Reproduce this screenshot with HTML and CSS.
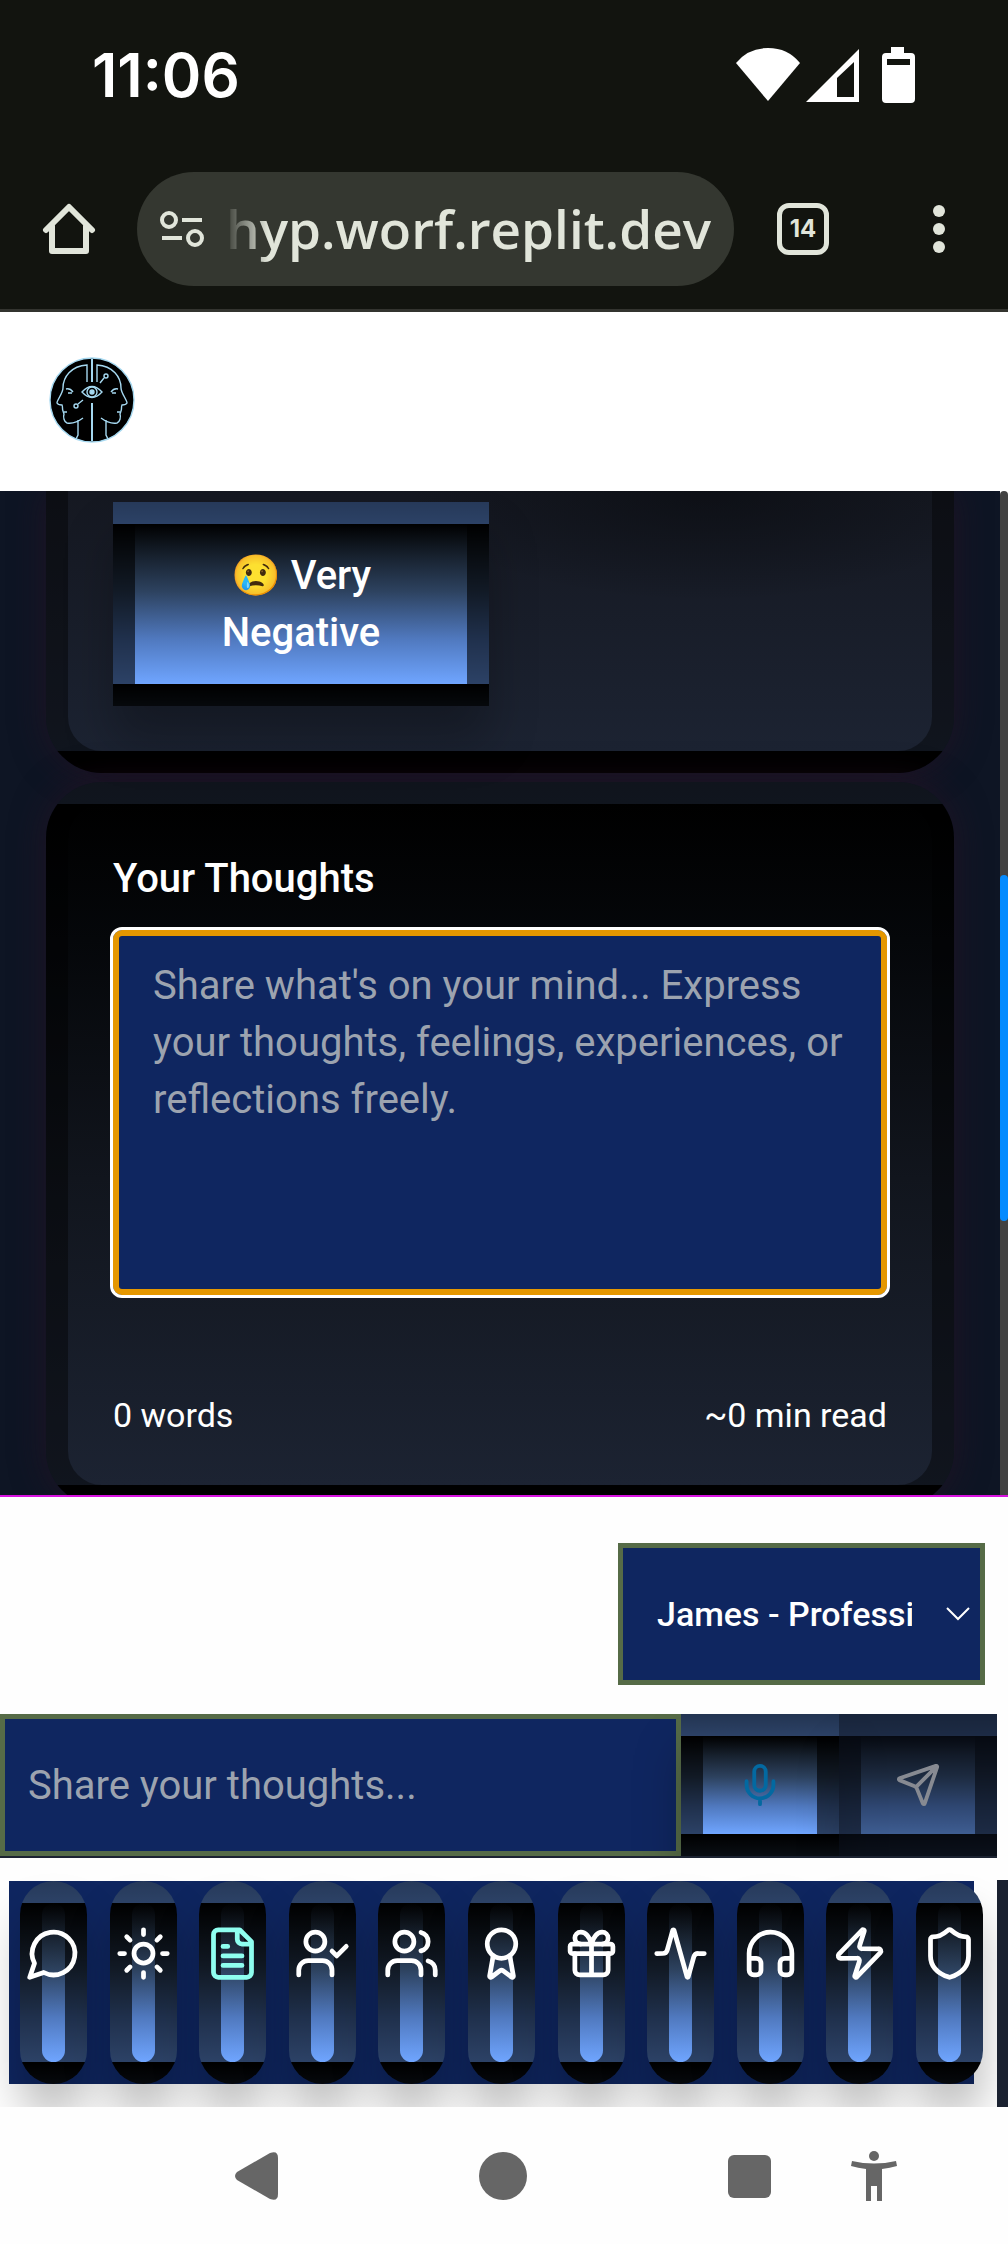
FILE: index.html
```html
<!DOCTYPE html>
<html lang="en">
<head>
<meta charset="utf-8">
<meta name="viewport" content="width=device-width, initial-scale=1">
<title>Journal</title>
<link rel="stylesheet" href="styles.css">
</head>
<body>
<div class="device">
  <div class="status">
    <time class="clock">11:06</time>
    <svg class="status-icons" width="180" height="58" viewBox="0 0 180 58" fill="#fff" aria-hidden="true">
      <path d="M0 17Q12 2 32 2T64 17L32 55Z"/>
      <path fill-rule="evenodd" d="M123 3V56H70ZM118 16L101 32V51H118Z"/>
      <path fill-rule="evenodd" d="M155 1H168V7H175Q179 7 179 11V53Q179 57 175 57H150Q146 57 146 53V11Q146 7 150 7H155ZM151 13V19H174V13Z"/>
    </svg>
  </div>

  <div class="browser-bar">
    <button class="chrome-btn" aria-label="Home">
      <svg width="54" height="54" viewBox="0 0 54 54" fill="none" stroke="#e1e5da" stroke-width="6" stroke-linejoin="round" stroke-linecap="round"><path d="M4 28L27 5L50 28M10 24V49H44V24"/></svg>
    </button>
    <div class="url-pill">
      <svg width="44" height="38" viewBox="0 0 44 38" fill="none" stroke="#e1e5da" stroke-width="4" aria-hidden="true"><circle cx="9" cy="10" r="7"/><path d="M22 10H42M2 28H22"/><circle cx="35" cy="28" r="7"/></svg>
      <span class="url">hyp.worf.replit.dev</span>
    </div>
    <button class="tabs-btn" aria-label="Open tabs">14</button>
    <button class="chrome-btn" aria-label="Menu">
      <svg width="12" height="48" viewBox="0 0 12 48" fill="#e1e5da"><circle cx="6" cy="6" r="6"/><circle cx="6" cy="24" r="6"/><circle cx="6" cy="42" r="6"/></svg>
    </button>
  </div>

  <header class="app-header">
    <svg class="logo" width="86" height="86" viewBox="0 0 86 86" fill="none" stroke="#a5d8f0" stroke-width="1.4" aria-label="Logo" role="img">
      <circle cx="43" cy="43" r="42" fill="#000"/>
      <path stroke-width="2" d="M43 2V25M43 46V84"/>
      <path d="M38 25V8C22 9 14 20 14 31C14 36 8 43 8 46C9 48 12 48 13 48C14 50 13 52 14 54L15 57C14 60 15 65 18 66C24 67 30 64 34 61M29 63V78L27 82"/>
      <path d="M48 25V8C64 9 72 20 72 31C72 36 78 43 78 46C77 48 74 48 73 48C72 50 73 52 72 54L71 57C72 60 71 65 68 66C62 67 56 64 52 61M57 63V78L59 82"/>
      <path d="M33 35Q43 24 53 35Q43 46 33 35Z"/><circle cx="43" cy="35" r="5"/><circle cx="43" cy="35" r="2" fill="#a5d8f0"/>
      <path d="M17 32Q21 31 24 35M19 36H23M69 32Q65 31 62 35M67 36H63M51 26L55 21M34 43L29 47M15 55H18M71 55H68"/>
      <circle cx="57" cy="19" r="2"/><circle cx="27" cy="49" r="2"/>
    </svg>
  </header>

  <div class="scroller">
    <main class="content">
      <section class="card card-mood">
        <button class="glass-btn mood-btn">😢 Very Negative</button>
      </section>
      <section class="card card-thoughts">
        <label class="field-label" for="thoughts">Your Thoughts</label>
        <textarea class="thoughts" id="thoughts" placeholder="Share what's on your mind... Express your thoughts, feelings, experiences, or reflections freely."></textarea>
        <div class="stats"><span>0 words</span><span>~0 min read</span></div>
      </section>
    </main>
    <div class="track"><div class="thumb"></div></div>
  </div>

  <div class="dock">
    <div class="dock-main">
      <div class="voice-row">
        <select class="voice" aria-label="Voice"><option>James - Professional</option></select>
      </div>
      <form class="composer">
        <input class="message" type="text" aria-label="Message" placeholder="Share your thoughts...">
        <button class="glass-btn tool-btn" type="button" aria-label="Record">
          <svg class="icon-sm mic" viewBox="0 0 24 24"><path d="M12 19v3M19 10v2a7 7 0 0 1-14 0v-2"/><rect x="9" y="2" width="6" height="13" rx="3"/></svg>
        </button>
        <button class="glass-btn tool-btn send" type="submit" aria-label="Send" disabled>
          <svg class="icon-sm" viewBox="0 0 24 24"><path d="M14.536 21.686a.5.5 0 0 0 .937-.024l6.5-19a.496.496 0 0 0-.635-.635l-19 6.5a.5.5 0 0 0-.024.937l7.93 3.18a2 2 0 0 1 1.112 1.11zM21.854 2.147l-10.94 10.939"/></svg>
        </button>
      </form>
      <nav class="tabs" aria-label="Sections">
        <div class="tab-list">
          <button class="glass-btn tab" aria-label="Chat"><svg class="icon" viewBox="0 0 24 24"><path d="M7.9 20A9 9 0 1 0 4 16.1L2 22Z"/></svg></button>
          <button class="glass-btn tab" aria-label="Daily"><svg class="icon" viewBox="0 0 24 24"><circle cx="12" cy="12" r="4"/><path d="M12 2v2M12 20v2M4.93 4.93l1.41 1.41M17.66 17.66l1.41 1.41M2 12h2M20 12h2M6.34 17.66l-1.41 1.41M19.07 4.93l-1.41 1.41"/></svg></button>
          <button class="glass-btn tab active" aria-label="Journal"><svg class="icon" viewBox="0 0 24 24"><path d="M15 2H6a2 2 0 0 0-2 2v16a2 2 0 0 0 2 2h12a2 2 0 0 0 2-2V7ZM14 2v4a2 2 0 0 0 2 2h4M10 9H8M16 13H8M16 17H8"/></svg></button>
          <button class="glass-btn tab" aria-label="Check-in"><svg class="icon" viewBox="0 0 24 24"><path d="M16 11l2 2 4-4M16 21v-2a4 4 0 0 0-4-4H6a4 4 0 0 0-4 4v2"/><circle cx="9" cy="7" r="4"/></svg></button>
          <button class="glass-btn tab" aria-label="Community"><svg class="icon" viewBox="0 0 24 24"><path d="M16 21v-2a4 4 0 0 0-4-4H6a4 4 0 0 0-4 4v2M22 21v-2a4 4 0 0 0-3-3.87M16 3.13a4 4 0 0 1 0 7.75"/><circle cx="9" cy="7" r="4"/></svg></button>
          <button class="glass-btn tab" aria-label="Achievements"><svg class="icon" viewBox="0 0 24 24"><path d="m15.477 12.89 1.515 8.526a.5.5 0 0 1-.81.47l-3.58-2.687a1 1 0 0 0-1.197 0l-3.586 2.686a.5.5 0 0 1-.81-.469l1.514-8.526"/><circle cx="12" cy="8" r="6"/></svg></button>
          <button class="glass-btn tab" aria-label="Rewards"><svg class="icon" viewBox="0 0 24 24"><rect x="3" y="8" width="18" height="4" rx="1"/><path d="M12 8v13M19 12v7a2 2 0 0 1-2 2H7a2 2 0 0 1-2-2v-7M7.5 8a2.5 2.5 0 0 1 0-5A4.8 8 0 0 1 12 8a4.8 8 0 0 1 4.5-5 2.5 2.5 0 0 1 0 5"/></svg></button>
          <button class="glass-btn tab" aria-label="Health"><svg class="icon" viewBox="0 0 24 24"><path d="M22 12h-2.48a2 2 0 0 0-1.93 1.46l-2.35 8.36a.25.25 0 0 1-.48 0L9.24 2.18a.25.25 0 0 0-.48 0l-2.35 8.36A2 2 0 0 1 4.49 12H2"/></svg></button>
          <button class="glass-btn tab" aria-label="Audio"><svg class="icon" viewBox="0 0 24 24"><path d="M3 14h3a2 2 0 0 1 2 2v3a2 2 0 0 1-2 2H5a2 2 0 0 1-2-2v-7a9 9 0 0 1 18 0v7a2 2 0 0 1-2 2h-1a2 2 0 0 1-2-2v-3a2 2 0 0 1 2-2h3"/></svg></button>
          <button class="glass-btn tab" aria-label="Energy"><svg class="icon" viewBox="0 0 24 24"><path d="M4 14a1 1 0 0 1-.78-1.63l9.9-10.2a.5.5 0 0 1 .86.46l-1.92 6.02A1 1 0 0 0 13 10h7a1 1 0 0 1 .78 1.63l-9.9 10.2a.5.5 0 0 1-.86-.46l1.92-6.02A1 1 0 0 0 11 14z"/></svg></button>
          <button class="glass-btn tab" aria-label="Privacy"><svg class="icon" viewBox="0 0 24 24"><path d="M20 13c0 5-3.5 7.5-7.66 8.95a1 1 0 0 1-.67-.01C7.5 20.5 4 18 4 13V6a1 1 0 0 1 1-1c2 0 4.5-1.2 6.24-2.72a1.17 1.17 0 0 1 1.52 0C14.51 3.81 17 5 19 5a1 1 0 0 1 1 1z"/></svg></button>
        </div>
      </nav>
    </div>
    <div class="next-panel"></div>
  </div>

  <div class="system-nav">
    <button class="sys-btn" aria-label="Back"><svg width="48" height="50" viewBox="0 0 48 50" fill="#666"><path d="M4 21L37 2Q45 -1 45 7V43Q45 51 37 48L4 29Q0 25 4 21Z"/></svg></button>
    <button class="sys-btn" aria-label="Home"><svg width="48" height="50" viewBox="0 0 48 50" fill="#666"><circle cx="24" cy="25" r="24"/></svg></button>
    <button class="sys-btn" aria-label="Recents"><svg width="48" height="50" viewBox="0 0 48 50" fill="#666"><rect x="3" y="4" width="43" height="43" rx="6"/></svg></button>
    <button class="sys-btn" aria-label="Accessibility"><svg width="48" height="50" viewBox="0 0 48 50" fill="#666"><circle cx="24" cy="5" r="5"/><path d="M2 10Q24 15 46 10L47 15Q40 17 32 18V50H27V35H21V50H16V18Q8 17 1 15Z"/></svg></button>
  </div>
</div>
</body>
</html>
```
FILE: styles.css
```css
* { box-sizing: border-box; }

body {
  margin: 0;
  background: #fefefe;
  color: #fff;
  font-family: Roboto, "Noto Sans", sans-serif;
}

button, input, select, textarea { font: inherit; color: inherit; margin: 0; }
button { padding: 0; border: 0; background: none; }
svg { display: block; flex: none; }

.device { display: flex; flex-direction: column; min-height: 100vh; }

/* Phone status bar */
.status {
  display: flex;
  align-items: center;
  justify-content: space-between;
  padding: 30px 92px 0 92px;
  height: 120px;
  background: #12140f;
}
.clock { font: 600 60px/90px Inter, sans-serif; }

/* Browser toolbar */
.browser-bar {
  display: flex;
  align-items: center;
  padding: 52px 63px 23px 42px;
  background: #12140f;
  border-bottom: 3px solid #33342f;
}
.url-pill {
  display: flex;
  align-items: center;
  gap: 20px;
  flex: 1;
  min-width: 0;
  height: 114px;
  margin: 0 43px 0 41px;
  padding: 0 23px;
  border-radius: 57px;
  background: #343730;
}
.url {
  display: flex;
  justify-content: flex-end;
  flex: 1;
  min-width: 0;
  overflow: hidden;
  color: #e1e5da;
  font: 600 53px/72px "Open Sans", sans-serif;
  mask-image: linear-gradient(90deg, transparent, #000 44px);
}
.tabs-btn {
  width: 52px;
  height: 52px;
  margin-right: 104px;
  border: 5px solid #e1e5da;
  border-radius: 12px;
  color: #e1e5da;
  font: 700 24px/40px Inter, sans-serif;
}

.app-header { padding: 45px 49px; background: #fff; }
.logo { margin-bottom: 3px; }

/* Scrolling journal */
.scroller { display: flex; border-bottom: 2px solid #d812e0; }
.content {
  flex: 1;
  min-width: 0;
  height: 1004px;
  overflow: hidden;
  padding: 0 46px;
  background: #0e1524;
}
.track { width: 8px; padding-top: 384px; border-radius: 4px 4px 0 0; background: #424242; }
.thumb { height: 346px; border-radius: 4px; background: #058bff; }

.card {
  border: 22px solid rgba(0, 0, 0, 0.4);
  border-radius: 56px;
  box-shadow: 0 0 34px rgba(44, 18, 36, 0.6);
}
.card-mood {
  padding: 11px 45px 45px;
  border-top: 0;
  border-radius: 0 0 56px 56px;
  background:
    linear-gradient(#000, #000) 0 100% / 100% 22px no-repeat border-box,
    radial-gradient(ellipse 300px 110px at 74% 0, rgba(8, 10, 14, 0.6), transparent) no-repeat,
    linear-gradient(#151821, #1c2332);
}
.card-thoughts {
  margin-top: 9px;
  padding: 46px 45px;
  background: linear-gradient(#000, #05070a 20%, #11151d 55%, #1c2332);
}

/* The gradient tiles under the translucent border */
.glass-btn {
  border: 22px solid rgba(0, 0, 0, 0.6);
  background: linear-gradient(#000, #17212e 20%, #2d425f 42%, #5079bf 72%, #6fa5ff);
  box-shadow: 0 34px 44px rgba(0, 0, 0, 0.25);
}
.mood-btn {
  width: 376px;
  padding: 23px 60px;
  font-size: 40px;
  font-weight: 500;
  line-height: 57px;
}

.field-label { display: block; font-size: 40px; font-weight: 500; line-height: 57px; }
.thoughts {
  display: block;
  width: 100%;
  height: 365px;
  margin: 23px 0 0;
  padding: 21px 34px;
  border: 6px solid #e59700;
  border-radius: 9px;
  outline: 3px solid #fff;
  background: #0f2660;
  font-size: 40px;
  line-height: 57px;
  resize: none;
}
.thoughts::placeholder, .message::placeholder { color: #9ca3af; opacity: 1; }
.stats {
  display: flex;
  justify-content: space-between;
  margin-top: 96px;
  font-size: 34px;
  line-height: 48px;
}

/* Bottom dock */
.dock { display: grid; grid-template-columns: minmax(0, 1fr) 11px; background: #fefefe; }
.dock-main { overflow: hidden; }
.voice-row { display: flex; justify-content: flex-end; padding: 46px 12px 29px; }
.voice {
  width: 367px;
  height: 142px;
  padding: 0 68px 0 34px;
  border: 5px solid #566b47;
  border-radius: 0;
  appearance: none;
  background: #0f2660 url("data:image/svg+xml,%3Csvg xmlns='http://www.w3.org/2000/svg' width='26' height='14' fill='none' stroke='white' stroke-width='2'%3E%3Cpath d='M2 1L13 12L24 1'/%3E%3C/svg%3E") no-repeat right 9px center;
  font-size: 34px;
  font-weight: 500;
}
.composer {
  display: flex;
  overflow: hidden;
  border-bottom: 2px solid #1c2332;
  background: #0e1524;
}
.message {
  flex: 1;
  min-width: 0;
  height: 142px;
  padding: 0 23px;
  border: 5px solid #566b47;
  border-radius: 0;
  background: #0f2660;
  font-size: 40px;
}
.tool-btn { display: grid; place-items: center; width: 158px; }
.send { opacity: 0.5; }

.icon, .icon-sm {
  fill: none;
  stroke: #fff;
  stroke-width: 2;
  stroke-linecap: round;
  stroke-linejoin: round;
}
.icon { width: 57px; height: 57px; }
.icon-sm { width: 46px; height: 46px; }
.mic { stroke: #0369a1; }

.tabs { padding: 23px 23px 23px 9px; }
.tab-list {
  display: flex;
  justify-content: space-between;
  padding-left: 11px;
  background: #0f2660;
}
.tab {
  display: flex;
  justify-content: center;
  flex: none;
  width: 67px;
  height: 203px;
  padding-top: 22px;
  border-radius: 34px;
}
.tab:last-child { margin-right: -9px; }
.active .icon { stroke: #8ffff0; }
.next-panel { margin-top: 383px; background: #1a2130; }

/* System navigation */
.system-nav {
  display: flex;
  align-items: center;
  flex: 1;
  padding: 0 110px 0 233px;
}
.sys-btn:nth-child(2) { margin: 0 198px; }
.sys-btn:last-child { margin-left: auto; }
```
